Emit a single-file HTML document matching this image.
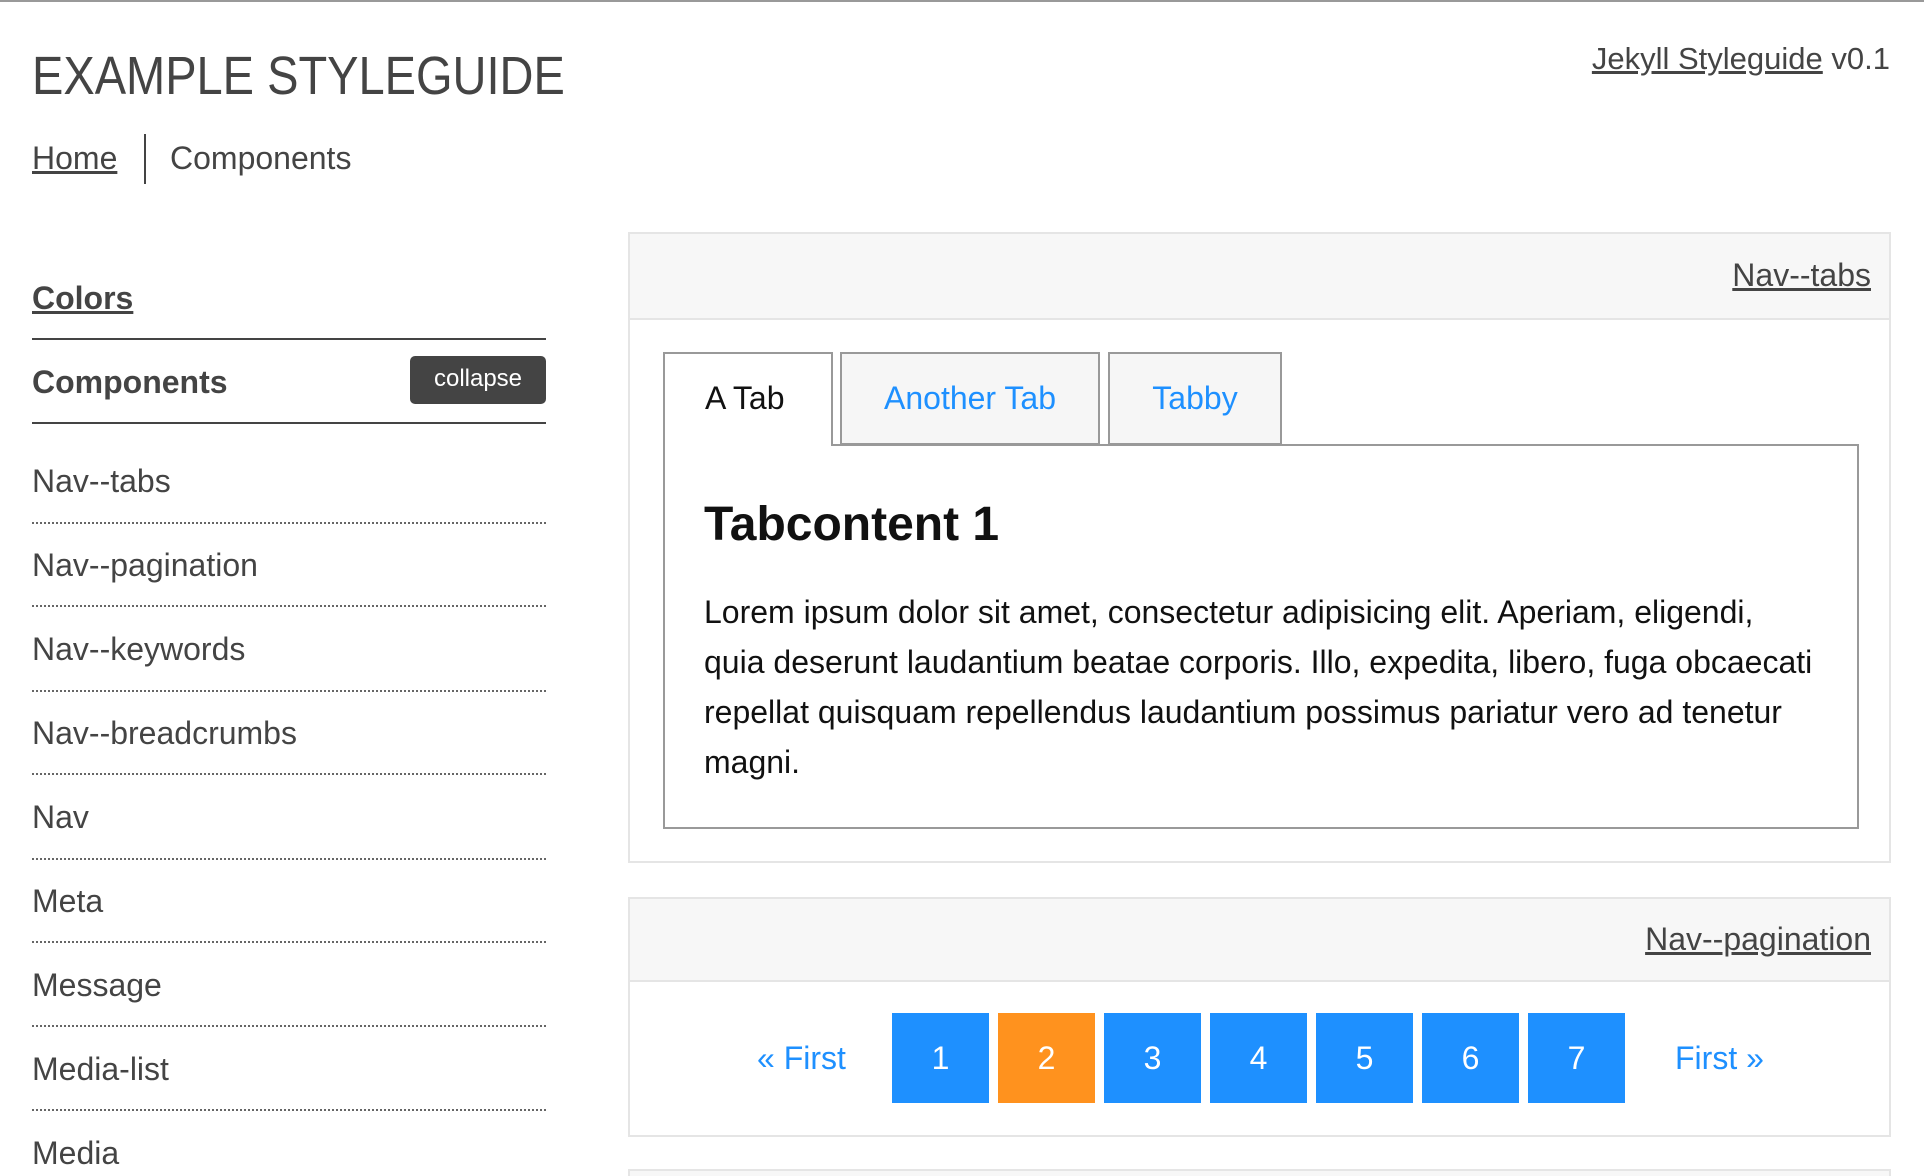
<!DOCTYPE html>
<html style="overflow:hidden;height:1176px"><head><meta charset="utf-8"><style>
*{margin:0;padding:0;box-sizing:border-box}
body{width:1924px;height:1176px;overflow:hidden;background:#fff;font-family:"Liberation Sans",Arial,sans-serif;color:#444;position:relative}
.a{position:absolute;white-space:nowrap}
a{color:inherit}
.dot{position:absolute;left:32px;width:514px;border-top:2px dotted #666}
.item{position:absolute;left:32px;font-size:32px;color:#444}
.panel{position:absolute;left:628px;width:1263px;border:2px solid #e5e5e5;background:#fff}
.ph{background:#f7f7f7;border-bottom:2px solid #e5e5e5;position:relative}
.tab{position:absolute;top:352px;height:93px;border:2px solid #999;background:#f6f6f6;color:#1e90ff;font-size:32px;text-align:center;line-height:88px}
.pg{position:absolute;top:1013px;width:97px;height:90px;background:#1e90ff;color:#fff;font-size:32px;text-align:center;line-height:90px}
</style></head><body>
<div class="a" style="left:0;top:0;width:1924px;height:2px;background:#999"></div>
<div class="a" style="left:32px;top:44px;font-size:47px;color:#444;transform:scaleY(1.14);transform-origin:left top">EXAMPLE STYLEGUIDE</div>
<div class="a" style="right:34px;top:41px;font-size:31px;color:#444"><a href="#">Jekyll Styleguide</a> v0.1</div>
<div class="a" style="left:32px;top:140px;font-size:32px"><a href="#">Home</a></div>
<div class="a" style="left:144px;top:134px;width:2px;height:50px;background:#444"></div>
<div class="a" style="left:170px;top:140px;font-size:32px">Components</div>

<div class="a" style="left:32px;top:280px;font-size:32px;font-weight:bold"><a href="#">Colors</a></div>
<div class="a" style="left:32px;top:338px;width:514px;height:2px;background:#444"></div>
<div class="a" style="left:32px;top:364px;font-size:32px;font-weight:bold">Components</div>
<div class="a" style="left:410px;top:356px;width:136px;height:48px;background:#444;border-radius:5px;color:#fff;font-size:24px;text-align:center;line-height:46px">collapse</div>
<div class="a" style="left:32px;top:422px;width:514px;height:2px;background:#444"></div>

<div class="item" style="top:463px">Nav--tabs</div><div class="dot" style="top:522px"></div>
<div class="item" style="top:547px">Nav--pagination</div><div class="dot" style="top:605px"></div>
<div class="item" style="top:631px">Nav--keywords</div><div class="dot" style="top:690px"></div>
<div class="item" style="top:715px">Nav--breadcrumbs</div><div class="dot" style="top:773px"></div>
<div class="item" style="top:799px">Nav</div><div class="dot" style="top:858px"></div>
<div class="item" style="top:883px">Meta</div><div class="dot" style="top:941px"></div>
<div class="item" style="top:967px">Message</div><div class="dot" style="top:1025px"></div>
<div class="item" style="top:1051px">Media-list</div><div class="dot" style="top:1109px"></div>
<div class="item" style="top:1135px">Media</div>

<div class="panel" style="top:232px;height:631px"><div class="ph" style="height:86px"><div class="a" style="right:18px;top:23px;font-size:32px"><a href="#">Nav--tabs</a></div></div></div>
<div class="a" style="left:663px;top:444px;width:1196px;height:385px;border:2px solid #999"></div>
<div class="tab" style="left:663px;width:170px;background:#fff;color:#111;border-bottom:none;height:94px;text-align:left;padding-left:40px">A Tab</div>
<div class="tab" style="left:840px;width:260px">Another Tab</div>
<div class="tab" style="left:1108px;width:174px">Tabby</div>
<div class="a" style="left:704px;top:497px;font-size:48px;font-weight:bold;color:#111">Tabcontent 1</div>
<div class="a" style="left:704px;top:587px;font-size:32px;line-height:50px;color:#111">Lorem ipsum dolor sit amet, consectetur adipisicing elit. Aperiam, eligendi,<br>quia deserunt laudantium beatae corporis. Illo, expedita, libero, fuga obcaecati<br>repellat quisquam repellendus laudantium possimus pariatur vero ad tenetur<br>magni.</div>

<div class="panel" style="top:897px;height:240px"><div class="ph" style="height:83px"><div class="a" style="right:18px;top:22px;font-size:32px"><a href="#">Nav--pagination</a></div></div></div>
<div class="a" style="left:757px;top:1040px;font-size:32px;color:#1e90ff">« First</div>
<div class="pg" style="left:892px">1</div>
<div class="pg" style="left:998px;background:#ff921e">2</div>
<div class="pg" style="left:1104px">3</div>
<div class="pg" style="left:1210px">4</div>
<div class="pg" style="left:1316px">5</div>
<div class="pg" style="left:1422px">6</div>
<div class="pg" style="left:1528px">7</div>
<div class="a" style="left:1675px;top:1040px;font-size:32px;color:#1e90ff">First »</div>

<div class="panel" style="top:1169px;height:7px;background:#f7f7f7;border-bottom:none"></div>
</body></html>
